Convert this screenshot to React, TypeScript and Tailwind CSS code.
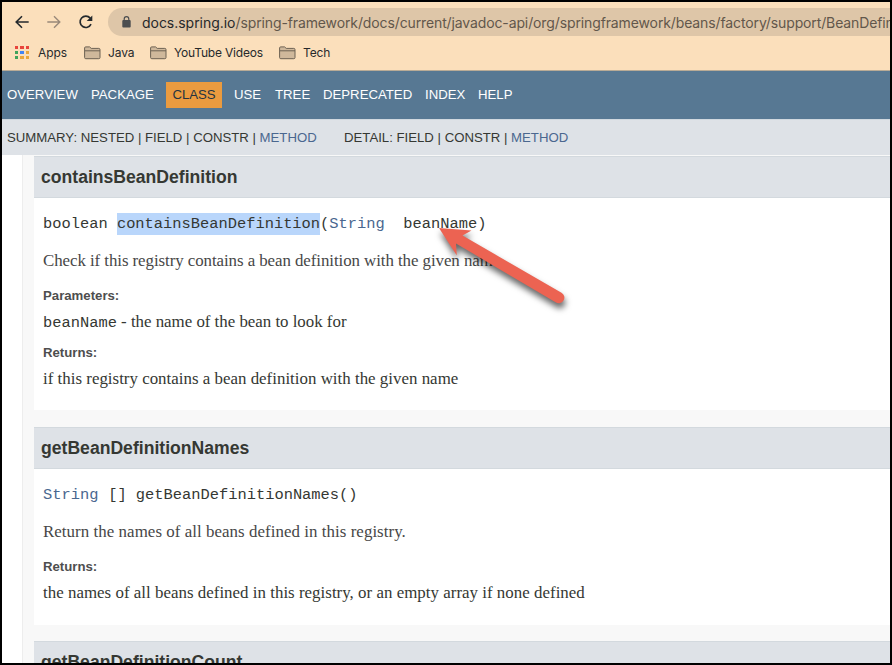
import type { ReactNode } from "react";

const SERIF = "font-['Liberation_Serif',serif] text-[16.9px]";
const MONO = "font-['Liberation_Mono',monospace] text-[15.4px] tracking-normal whitespace-pre";

function Folder() {
  return (
    <svg width="17" height="14" viewBox="0 0 17 14" className="shrink-0">
      <path d="M.6 3V2Q.6 .9 1.7.9H5.6L7.2 2.4H14.8Q16 2.4 16 3.6V11.6Q16 12.7 14.8 12.7H1.8Q.6 12.7.6 11.6Z" fill="#cfb89b" stroke="#6d6253" strokeWidth="1" />
      <path d="M1 4.8H16" stroke="#6d6253" strokeWidth="1" />
    </svg>
  );
}

const appColors = ["#e8453c", "#e8453c", "#e8453c", "#3fa35b", "#4285f4", "#eba73a", "#3fa35b", "#eba73a", "#eba73a"];

function Browser() {
  return (
    <header className="h-[69px] shrink-0 border-b border-[#b9ab96] bg-[#fbdfbb] font-[Inter,sans-serif] text-[#27292b]">
      <div className="flex h-[36px] items-center pt-1">
        <div className="flex w-[106px] items-center pl-[13px]">
          <svg width="14" height="14" viewBox="0 0 14 14" fill="none" stroke="#24292d" strokeWidth="1.6">
            <path d="M13.7 7H1.8M7 1.2 1.2 7 7 12.8" />
          </svg>
          <svg width="14" height="14" viewBox="0 0 14 14" fill="none" stroke="#99897a" strokeWidth="1.4" className="ml-[18px]">
            <path d="M.3 7H12.2M7 1.2 12.8 7 7 12.8" />
          </svg>
          <svg width="16" height="16" viewBox="0 0 16 16" fill="none" stroke="#24292d" strokeWidth="1.7" className="ml-[17px]">
            <path d="M13 10.2A5.7 5.7 0 1 1 12.2 4.1" />
            <path d="M14.3 1.4V7H8.7Z" fill="#24292d" stroke="none" />
          </svg>
        </div>
        <div className="flex h-[28px] min-w-0 flex-1 items-center overflow-hidden rounded-l-full bg-[#dec6a8] pl-[14px]">
          <svg width="9" height="12" viewBox="0 0 9 12" className="shrink-0">
            <rect x="0.3" y="4" width="8.4" height="7.5" rx="1" fill="#4c4e50" />
            <path d="M2.2 4.5V2.9A2.3 2.3 0 0 1 6.8 2.9V4.5" fill="none" stroke="#4c4e50" strokeWidth="1.2" />
          </svg>
          <div className="ml-[11px] text-[14px] whitespace-nowrap text-[#62574b]">
            <span className="tracking-[-0.03px] text-[#26282a]">docs.spring.io</span>
            <span className="tracking-[-0.12px]">/spring-framework/docs/current/javadoc-api/org/springframework/beans/factory/support/BeanDefinitionRegistry.html</span>
          </div>
        </div>
      </div>
      <div className="flex h-[29px] items-center pl-[13px] text-[12px] tracking-[-0.1px]">
        <div className="grid grid-cols-3 gap-[2px]">
          {appColors.map((c, i) => (
            <i key={i} className="size-[3.3px]" style={{ background: c }} />
          ))}
        </div>
        <span className="ml-[9.1px] w-[46px]">Apps</span>
        <Folder />
        <span className="ml-[7px] w-[42px]">Java</span>
        <Folder />
        <span className="ml-[7px] w-[105px] tracking-[-0.2px] whitespace-nowrap">YouTube Videos</span>
        <Folder />
        <span className="ml-[7px]">Tech</span>
      </div>
    </header>
  );
}

function Section({ title, height, children }: { title: string; height: string; children?: ReactNode }) {
  return (
    <section className={`${height} shrink-0 bg-white`}>
      <h3 className="h-[42px] border-y border-[#d3d9de] bg-[#dee2e7] pl-[7px] text-[17.6px] leading-[41px] font-bold">{title}</h3>
      <div className="pl-[9px]">{children}</div>
    </section>
  );
}

function Label({ children }: { children: ReactNode }) {
  return <div className="text-[13.2px] leading-[20px] font-bold text-[#4e4e4e]">{children}</div>;
}

export default function App() {
  return (
    <div className="relative flex h-[665px] w-[892px] flex-col overflow-hidden border-2 border-black bg-white font-['Liberation_Sans',sans-serif] text-[#353833]">
      <Browser />
      <nav className="flex h-[48px] shrink-0 items-center bg-[#577893] pl-[5px] text-[13.2px] text-white">
        <span className="w-[84px]">OVERVIEW</span>
        <span className="w-[75px]">PACKAGE</span>
        <span className="mr-3 flex h-[26px] w-[56px] items-center justify-center bg-[#eb9b3f] text-[#253441]">CLASS</span>
        <span className="w-[41px]">USE</span>
        <span className="w-[48px]">TREE</span>
        <span className="w-[102px]">DEPRECATED</span>
        <span className="w-[53px]">INDEX</span>
        <span>HELP</span>
      </nav>
      <div className="flex h-[36px] shrink-0 items-center border-t border-[#d0d8df] bg-[#dee2e7] pl-[5px] text-[13.2px] whitespace-nowrap">
        <span className="w-[337px]">SUMMARY: NESTED | FIELD | CONSTR | <span className="text-[#4a678f]">METHOD</span></span>
        <span>DETAIL: FIELD | CONSTR | <span className="text-[#4a678f]">METHOD</span></span>
      </div>
      <main className="ml-[20px] flex min-h-0 flex-1 flex-col gap-[17px] overflow-hidden border-l border-[#ededed] bg-[#f8f8f8] pt-px pl-[11px]">
        <Section title="containsBeanDefinition" height="h-[254px]">
          <div className={`${MONO} mt-[15px] leading-[22px]`}>
            boolean <span className="inline-block bg-[#b9d6fb]">containsBeanDefinition</span>(<span className="text-[#4a678f]">String</span>{"  "}beanName)
          </div>
          <p className={`${SERIF} mt-[15px] leading-[22px] tracking-[-0.07px] text-[#474747]`}>Check if this registry contains a bean definition with the given name.</p>
          <div className="mt-[14px]"><Label>Parameters:</Label></div>
          <p className={`${SERIF} mt-[5px] leading-[22px] tracking-[-0.02px]`}><span className={MONO}>beanName</span> - the name of the bean to look for</p>
          <div className="mt-[9px]"><Label>Returns:</Label></div>
          <p className={`${SERIF} mt-[5px] leading-[22px] tracking-[0.01px]`}>if this registry contains a bean definition with the given name</p>
        </Section>
        <Section title="getBeanDefinitionNames" height="-mb-px h-[198px]">
          <div className={`${MONO} mt-[16px] leading-[21px]`}>
            <span className="mr-[0.5px] text-[#4a678f]">String</span> [] getBeanDefinitionNames()
          </div>
          <p className={`${SERIF} mt-[15px] leading-[22px] tracking-[0.05px] text-[#474747]`}>Return the names of all beans defined in this registry.</p>
          <div className="mt-[14px]"><Label>Returns:</Label></div>
          <p className={`${SERIF} mt-[5px] leading-[22px] tracking-[0.02px]`}>the names of all beans defined in this registry, or an empty array if none defined</p>
        </Section>
        <Section title="getBeanDefinitionCount" height="h-[60px]" />
      </main>
      <svg width="150" height="100" viewBox="430 220 150 100" className="pointer-events-none absolute top-[218px] left-[428px] drop-shadow-[1px_5px_3px_rgba(0,0,0,0.6)]">
        <path d="M439 228 471.5 230.5 462.5 235.5 561.5 292.7A5.4 5.4 0 0 1 556 302.5L456 243.5 456.8 255.5Z" fill="#ec6352" />
      </svg>
    </div>
  );
}
